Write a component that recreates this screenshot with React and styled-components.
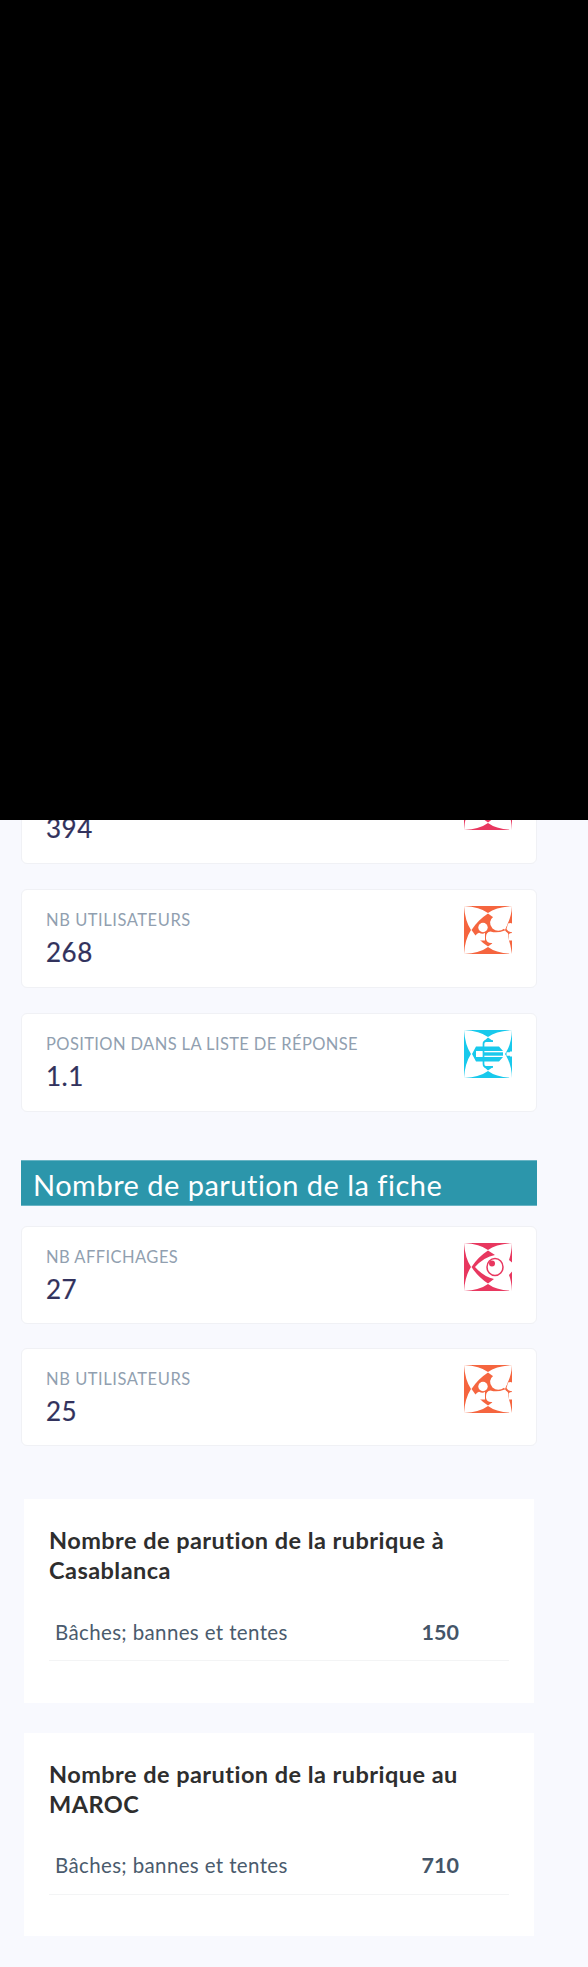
import React from "react";
import styled, { createGlobalStyle } from "styled-components";

const GlobalStyle = createGlobalStyle`
  * { box-sizing: border-box; }
  body {
    margin: 0;
    background: #f8f9fe;
    font-family: Lato, "Open Sans", sans-serif;
  }
`;

const Page = styled.main`
  height: 1967px;
  overflow: hidden;
  display: flow-root;
`;

const Cover = styled.div`
  position: relative;
  z-index: 1;
  height: 820px;
  background: #000;
`;

const Stats = styled.section`
  display: flex;
  flex-direction: column;
  gap: ${(p) => p.$gap}px;
  margin: ${(p) => p.$top}px 51.5px 0 21px;
`;

const Card = styled.article`
  display: flex;
  justify-content: space-between;
  height: ${(p) => p.$height}px;
  padding: 16px 23.5px 0 24px;
  background: #fff;
  border: 1px solid #f0f1f5;
  border-radius: 6px;
`;

const Label = styled.div`
  margin-top: 4px;
  font-size: 16.5px;
  line-height: 20px;
  letter-spacing: ${(p) => p.$spacing}px;
  color: #919fb0;
  white-space: nowrap;
`;

const Value = styled.div`
  margin-top: 7px;
  font-size: 26px;
  line-height: 30px;
  letter-spacing: 0.5px;
  color: #32325d;
  -webkit-text-stroke: 0.2px #32325d;
`;

const Icon = styled.svg`
  width: 48px;
  height: 48px;
  flex: none;
  color: ${(p) => p.$color};
`;

const Banner = styled.h2`
  height: 46px;
  margin: 48.5px 51px 0 21px;
  padding: 7px 12px 0;
  background: #2c96ab;
  border: solid #69b4c4;
  border-width: 1px 0;
  color: #fff;
  font-size: 29px;
  font-weight: 400;
  line-height: 34px;
  letter-spacing: 0.48px;
  white-space: nowrap;
`;

const Panels = styled.section`
  display: flex;
  flex-direction: column;
  gap: 30px;
  margin: 53.6px 54px 0 24px;
`;

const Panel = styled.article`
  height: 203.5px;
  padding: 26px 25px 0;
  background: #fff;
`;

const Title = styled.h3`
  margin: 0;
  font-size: 23.5px;
  line-height: 30px;
  font-weight: 700;
  letter-spacing: 0.46px;
  white-space: nowrap;
  color: #2e2e2e;
`;

const Row = styled.div`
  display: flex;
  justify-content: space-between;
  align-items: baseline;
  height: 55px;
  margin-top: 21px;
  padding: 11.5px 50px 0 6px;
  border-bottom: 1.5px solid #f3f4f5;
  color: #4a5b6d;
  font-size: 20.5px;
  line-height: 28px;
  letter-spacing: 0.36px;
`;

const Count = styled.strong`
  font-size: 21.5px;
  letter-spacing: 0;
  color: #445568;
`;

const Frame = () => (
  <g fill="currentColor">
    <path d="M0 0H48Q32 1 24 7Q16 1 0 0Z" />
    <path d="M0 48H48Q32 47 24 41Q16 47 0 48Z" />
    <path d="M0 0Q1 15 7 24Q1 33 0 48Z" />
  </g>
);

const EyeIcon = () => (
  <Icon viewBox="0 0 48 48" $color="#e8375f">
    <Frame />
    <path fill="currentColor" d="M24 7.500L31 12Q20 14 11 24Q20 34 30 36L24 40.500Q14 34 7.500 24Q14 14 24 7.500Z" />
    <ellipse cx="31" cy="24" rx="8" ry="8.500" fill="none" stroke="currentColor" strokeWidth="1.500" />
    <circle cx="28" cy="20.500" r="3" fill="currentColor" />
    <path fill="currentColor" d="M48 0Q47.500 10 45 17L48 19.500ZM48 48Q47.500 38 45 32L48 28.500Z" />
  </Icon>
);

const UsersIcon = () => (
  <Icon viewBox="0 0 48 48" $color="#f5653f">
    <Frame />
    <path fill="currentColor" d="M24 7.500Q34 14 41 24Q34 34 24 40.500Q14 34 7.500 24Q14 14 24 7.500Z" />
    <path fill="currentColor" d="M48 0Q47.500 10 43.500 18L41 24Q46 34 48 48Z" />
    <g fill="#fff">
      <circle cx="19" cy="21.500" r="4.700" />
      <path d="M7 34.500L11.500 29.500Q13 27.200 15 26.800Q19 28.500 21 26.800V34.500Z" />
      <path d="M29.500 10.500L34 6H44L43 19L40.500 22.500Q34 27 28.500 22.500Q23 16 29.500 10.500Z" />
      <path d="M22 33V31Q22 26 26.500 25.500Q33 27.500 40 24.800Q44 26 44.500 29V42H31L28 37Q23 37.500 22 33Z" />
      <path d="M44 17.500Q48 16 49 19V26Q45 27 42.500 23Z" />
      <path d="M45 28Q46 26.800 49 27V34.500H45Z" />
    </g>
  </Icon>
);

const PositionIcon = () => (
  <Icon viewBox="0 0 48 48" $color="#18c9ec">
    <Frame />
    <path fill="currentColor" d="M24 7.500L29 11H20ZM24 40.500L29 37H20Z" />
    <path fill="none" stroke="currentColor" strokeWidth="1.700" d="M29 11.200H22Q19.500 11.200 19.500 14V34Q19.500 36.800 22 36.800H29" />
    <path fill="currentColor" d="M12 16.500H35L39 21H12V27H39L35 31.500H12L8 24Z" />
    <path fill="currentColor" d="M19 22.300H39V25.700H19Z" />
    <path fill="currentColor" d="M48 0Q47.500 13 42.500 21.500H48ZM48 48Q47.500 35 42.500 26.500H48ZM41 24L42.500 21.500H46V22.300H42.500V25.700H46V26.500H42.500Z" />
    <path fill="#fff" d="M12.500 21.500H17.500V26.500H12.500Z" />
  </Icon>
);

const StatCard = ({ label, value, spacing, height = 98.5, icon }) => (
  <Card $height={height}>
    <div>
      <Label $spacing={spacing}>{label}</Label>
      <Value>{value}</Value>
    </div>
    {icon}
  </Card>
);

const RubricPanel = ({ title, place, count }) => (
  <Panel>
    <Title>
      {title}
      <br />
      {place}
    </Title>
    <Row>
      <span>Bâches; bannes et tentes</span>
      <Count>{count}</Count>
    </Row>
  </Panel>
);

export default function App() {
  return (
    <>
      <GlobalStyle />
      <Page>
        <Cover />
        <Stats $top={-55} $gap={25.5}>
          <StatCard label="NB AFFICHAGES" value="394" spacing={0.45} icon={<EyeIcon />} />
          <StatCard label="NB UTILISATEURS" value="268" spacing={0.55} icon={<UsersIcon />} />
          <StatCard label="POSITION DANS LA LISTE DE RÉPONSE" value="1.1" spacing={0.38} icon={<PositionIcon />} />
        </Stats>
        <Banner>Nombre de parution de la fiche</Banner>
        <Stats $top={20} $gap={24.5}>
          <StatCard label="NB AFFICHAGES" value="27" spacing={0.45} height={97.5} icon={<EyeIcon />} />
          <StatCard label="NB UTILISATEURS" value="25" spacing={0.55} height={97.5} icon={<UsersIcon />} />
        </Stats>
        <Panels>
          <RubricPanel title="Nombre de parution de la rubrique à" place="Casablanca" count="150" />
          <RubricPanel title="Nombre de parution de la rubrique au" place="MAROC" count="710" />
        </Panels>
      </Page>
    </>
  );
}
